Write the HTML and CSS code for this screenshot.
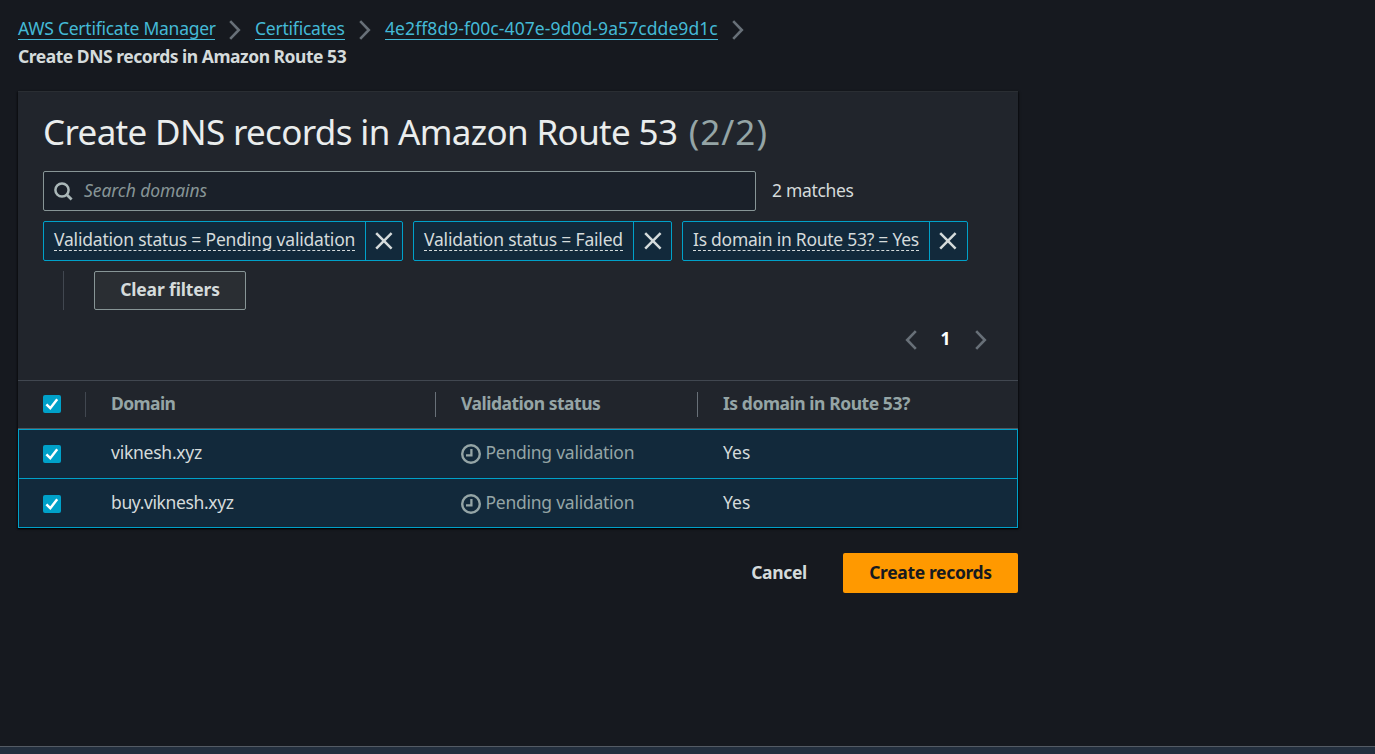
FILE: index.html
```html
<!DOCTYPE html>
<html lang="en">
<head>
<meta charset="utf-8">
<title>Create DNS records in Amazon Route 53</title>
<link rel="stylesheet" href="styles.css">
</head>
<body>
<svg class="defs" aria-hidden="true">
  <symbol id="chevron" viewBox="0 0 12 20"><path d="M1.2 1.2 9.8 10 1.2 18.8" fill="none" stroke="currentColor" stroke-width="2.6"/></symbol>
  <symbol id="close" viewBox="0 0 18 18"><path d="M1.2 1.2 16.6 16.6M16.6 1.2 1.2 16.6" fill="none" stroke="currentColor" stroke-width="2.5"/></symbol>
  <symbol id="check" viewBox="0 0 18 18"><path d="M3.4 9.3 7.3 13.2 14.2 4.2" fill="none" stroke="#fff" stroke-width="2.5"/></symbol>
  <symbol id="clock" viewBox="0 0 20 20"><circle cx="10" cy="10" r="8.8" fill="none" stroke="currentColor" stroke-width="2.4"/><path d="M10.4 5V11.4H5" fill="none" stroke="currentColor" stroke-width="2.3"/></symbol>
</svg>
<main class="page">
  <nav class="crumbs">
    <div class="crumb-line">
      <a class="link crumb-a">AWS Certificate Manager</a><svg class="chev"><use href="#chevron"/></svg>
      <a class="link crumb-b">Certificates</a><svg class="chev"><use href="#chevron"/></svg>
      <a class="link crumb-c">4e2ff8d9-f00c-407e-9d0d-9a57cdde9d1c</a><svg class="chev"><use href="#chevron"/></svg>
    </div>
    <div class="current">Create DNS records in Amazon Route 53</div>
  </nav>

  <section class="card">
    <header class="card-head">
      <h1 class="title"><span>Create DNS records in Amazon Route 53</span><span class="count">(2/2)</span></h1>
      <div class="search-row">
        <div class="search">
          <svg class="glass" viewBox="0 0 20 20"><circle cx="8" cy="8" r="6.6" fill="none" stroke="currentColor" stroke-width="2.5"/><path d="M12.6 12.6 17.6 17.6" stroke="currentColor" stroke-width="2.8"/></svg>
          <span class="placeholder">Search domains</span>
        </div>
        <span class="matches">2 matches</span>
      </div>
      <div class="tokens">
        <div class="token token-a"><span class="token-label"><span class="dashed">Validation status = Pending validation</span></span><span class="token-x"><svg class="x"><use href="#close"/></svg></span></div>
        <div class="token token-b"><span class="token-label"><span class="dashed">Validation status = Failed</span></span><span class="token-x"><svg class="x"><use href="#close"/></svg></span></div>
        <div class="token token-c"><span class="token-label"><span class="dashed">Is domain in Route 53? = Yes</span></span><span class="token-x"><svg class="x"><use href="#close"/></svg></span></div>
        <div class="clear-wrap"><button class="btn clear">Clear filters</button></div>
      </div>
      <div class="pager"><svg class="chev prev"><use href="#chevron"/></svg><b class="page-no">1</b><svg class="chev"><use href="#chevron"/></svg></div>
    </header>

    <div class="table">
      <div class="row head">
        <div class="cell"><span class="box"><svg class="tick"><use href="#check"/></svg></span></div>
        <div class="cell split dim"><span class="label h-domain">Domain</span></div>
        <div class="cell split"><span class="label h-status">Validation status</span></div>
        <div class="cell split"><span class="label h-route">Is domain in Route 53?</span></div>
      </div>
      <div class="row selected">
        <div class="cell"><span class="box"><svg class="tick"><use href="#check"/></svg></span></div>
        <div class="cell"><span class="label">viknesh.xyz</span></div>
        <div class="cell status"><svg class="clock"><use href="#clock"/></svg><span class="label">Pending validation</span></div>
        <div class="cell"><span class="label yes">Yes</span></div>
      </div>
      <div class="row selected last">
        <div class="cell"><span class="box"><svg class="tick"><use href="#check"/></svg></span></div>
        <div class="cell"><span class="label buy">buy.viknesh.xyz</span></div>
        <div class="cell status"><svg class="clock"><use href="#clock"/></svg><span class="label">Pending validation</span></div>
        <div class="cell"><span class="label yes">Yes</span></div>
      </div>
    </div>
  </section>

  <div class="actions"><button class="btn cancel">Cancel</button><button class="btn primary">Create records</button></div>
</main>
<footer class="bottom-bar"></footer>
</body>
</html>
```

FILE: styles.css
```css
* { box-sizing: border-box; }
body {
  margin: 0;
  height: 754px;
  overflow: hidden;
  display: flex;
  flex-direction: column;
  background: #16191f;
  color: #d5dbdb;
  font: 17.5px/28px "Noto Sans", "Open Sans", sans-serif;
  letter-spacing: -0.25px;
}
.defs { display: none; }
.page { flex: 1; width: 1018px; padding: 14px 0 0 18px; }

.crumbs { height: 77px; }
.crumb-line { display: flex; align-items: flex-start; height: 28px; padding-top: 2px; }
.link {
  height: 24px;
  color: #44b9d6;
  line-height: 25px;
  border-bottom: 1px solid #44b9d6;
  white-space: nowrap;
}
.crumb-a { width: 197px; }
.crumb-b { width: 90px; letter-spacing: -0.23px; }
.crumb-c { width: 333px; letter-spacing: 0.08px; }
.chev { width: 12px; height: 20px; margin: 4px 14px 0; color: #687078; flex: none; }
.current { font-weight: 700; letter-spacing: -0.48px; }

.card {
  height: 437px;
  background: #21252c;
  border-top: 1px solid #2a2e33;
  box-shadow: 0 1px 1px rgba(0, 0, 0, .6), 1px 1px 2px rgba(0, 0, 0, .5), -1px 1px 2px rgba(0, 0, 0, .4);
}
.card-head { height: 288px; padding: 18px 25px 0; }
.title {
  display: flex;
  gap: 11.5px;
  margin: 0 0 17px;
  height: 44px;
  color: #eaeded;
  font-size: 35px;
  font-weight: 400;
  line-height: 44px;
  letter-spacing: -0.66px;
}
.count { color: #95a5a6; letter-spacing: 1px; }
.search-row { display: flex; align-items: center; gap: 16px; }
.search {
  display: flex;
  align-items: center;
  width: 713px;
  height: 40px;
  padding-left: 10px;
  background: #1a2029;
  border: 1px solid #879596;
  border-radius: 2px;
}
.glass { width: 20px; height: 20px; color: #aab7b8; margin-top: 1px; }
.placeholder { margin-left: 10px; padding-bottom: 2px; color: #879596; font-style: italic; letter-spacing: -0.08px; }
.matches { padding-bottom: 2px; letter-spacing: -0.33px; }

.tokens { display: flex; flex-wrap: wrap; gap: 10px; margin-top: 10px; }
.token {
  display: flex;
  height: 40px;
  background: #12293b;
  border: 1px solid #00a1c9;
  border-radius: 2px;
  letter-spacing: -0.2px;
}
.token-a { width: 360px; }
.token-b { width: 259px; }
.token-c { width: 286px; letter-spacing: -0.26px; }
.token-label { flex: 1; padding: 5px 10px 0; white-space: nowrap; }
.dashed { display: block; height: 24px; line-height: 25px; border-bottom: 1px dashed #d5dbdb; }
.token-x {
  display: flex;
  align-items: center;
  justify-content: center;
  width: 38px;
  border-left: 1px solid #00a1c9;
}
.token-c .token-x { padding-right: 2px; }
.x { width: 18px; height: 18px; }
.clear-wrap { margin-left: 20px; padding-left: 30px; height: 39px; border-left: 1px solid #414750; }
.btn {
  padding: 0 0 3px;
  color: #d5dbdb;
  background: none;
  border: 0;
  border-radius: 2px;
  font: 700 17.5px/34px "Noto Sans", "Open Sans", sans-serif;
}
.clear { width: 152px; height: 39px; background: #2a2e33; border: 1px solid #879596; letter-spacing: -0.15px; }

.pager { display: flex; align-items: center; justify-content: flex-end; height: 28px; margin-top: 15px; padding-right: 6px; }
.pager .chev { margin: 2px 0 0; }
.pager .prev { transform: scaleX(-1); }
.page-no { width: 58px; padding: 0 1px 2px 0; text-align: center; color: #fff; }

.row { display: grid; grid-template-columns: 67px 350px 262px 1fr; }
.cell { display: flex; align-items: center; padding-left: 25px; }
.label { padding: 0 0 3px 1px; }
.head { height: 49px; border-top: 1px solid #414750; border-bottom: 1px solid #50565c; color: #95a5a6; font-weight: 700; }
.head .box { margin-bottom: 1px; }
.split { position: relative; }
.split::before { content: ""; position: absolute; left: 0; top: 11px; width: 1px; height: 25px; background: #687078; }
.split.dim::before { background: #414750; }
.h-domain { letter-spacing: -0.6px; }
.h-status { letter-spacing: -0.5px; }
.h-route { letter-spacing: -0.45px; }
.selected { height: 49px; background: #12293b; border: 1px solid #00a1c9; border-bottom: 0; padding-bottom: 1px; }
.selected .cell { margin-left: -1px; }
.last { height: 50px; border-bottom: 1px solid #00a1c9; padding: 1px 0 0; }
.box { width: 18px; height: 18px; background: #00a1c9; border-radius: 2px; }
.tick { display: block; width: 18px; height: 18px; }
.buy { letter-spacing: -0.38px; }
.status { color: #95a5a6; }
.clock { width: 20px; height: 20px; margin: 0 3.5px 0 1px; }
.yes { letter-spacing: 0; }

.actions { display: flex; justify-content: flex-end; gap: 36px; margin-top: 25px; }
.cancel { width: 56px; height: 40px; letter-spacing: -0.35px; }
.primary { width: 175px; height: 40px; background: #ff9900; color: #16191f; letter-spacing: -0.35px; }
.bottom-bar { height: 8px; background: #232f3e; border-top: 1px solid #545b64; }
```
